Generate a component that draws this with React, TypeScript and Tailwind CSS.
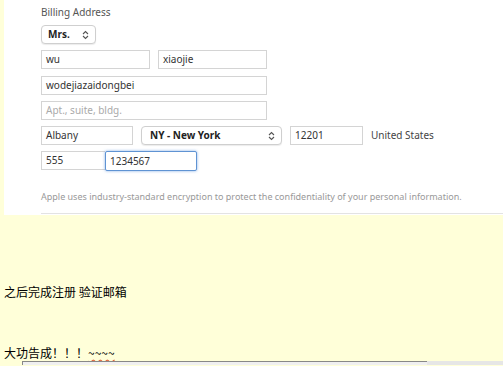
import { ReactNode } from 'react'

const font = { fontFamily: '"Noto Sans", "Open Sans", sans-serif' }

function Field({
    value,
    placeholder,
    focused,
    className,
}: {
    value?: string
    placeholder?: string
    focused?: boolean
    className: string
}): JSX.Element {
    const border = focused
        ? 'h-[20px] rounded-[2px] border-[#5f93d3] shadow-[0_0_3px_rgba(80,140,220,0.7)]'
        : 'h-[19px] border-[#d4d4d4]'
    return (
        <div
            className={`flex items-center border bg-white px-[4px] text-[10px] ${border} ${
                value ? 'text-[#333]' : 'text-[#aaa]'
            } ${className}`}
        >
            {value ?? placeholder}
        </div>
    )
}

function Chevrons(): JSX.Element {
    return (
        <svg width="7" height="10" viewBox="0 0 7 10" fill="none" stroke="#555" strokeWidth="1.1">
            <path d="M1 4 L3.5 1.5 L6 4" />
            <path d="M1 6 L3.5 8.5 L6 6" />
        </svg>
    )
}

function Select({ children, className }: { children: ReactNode; className: string }): JSX.Element {
    return (
        <div
            className={`flex h-[19px] items-center justify-between rounded-[4px] border border-[#cfcfcf] bg-white pr-[6px] text-[10px] font-bold text-[#222] shadow-[0_1px_1px_rgba(0,0,0,0.08)] ${className}`}
        >
            <span>{children}</span>
            <Chevrons />
        </div>
    )
}

export default function App(): JSX.Element {
    return (
        <div className="h-[366px] w-[503px] overflow-hidden bg-[#ffffd9]">
            <div className="ml-[4px] h-[215px] bg-white pl-[37px] pt-[4px]" style={font}>
                <div className="text-[10px] leading-[16px] text-[#555]">Billing Address</div>
                <Select className="mt-[5px] w-[55px] pl-[6px]">Mrs.</Select>
                <div className="mt-[6px] flex gap-[8px]">
                    <Field value="wu" className="w-[109px]" />
                    <Field value="xiaojie" className="w-[109px]" />
                </div>
                <Field value="wodejiazaidongbei" className="mt-[7px] w-[226px]" />
                <Field placeholder="Apt., suite, bldg." className="mt-[6px] w-[226px]" />
                <div className="mt-[6px] flex items-center">
                    <Field value="Albany" className="w-[92px]" />
                    <Select className="ml-[8px] w-[141px] pl-[8px]">NY - New York</Select>
                    <Field value="12201" className="ml-[8px] w-[73px]" />
                    <span className="ml-[8px] text-[10px] text-[#444]">United States</span>
                </div>
                <div className="mt-[6px] flex">
                    <Field value="555" className="w-[64px] border-r-0" />
                    <Field value="1234567" focused className="w-[92px]" />
                </div>
                <div className="mt-[20px] text-[9px] leading-[12px] text-[#999]">
                    Apple uses industry-standard encryption to protect the confidentiality of your personal information.
                </div>
                <div className="mt-[10px] h-px bg-[#e3e3e3]" />
            </div>
            <div
                className="ml-[4px] mt-[70px] text-[12px] leading-[14px] text-black"
                style={{ fontFamily: '"Noto Sans CJK SC", sans-serif' }}
            >
                之后完成注册 验证邮箱
            </div>
            <div
                className="ml-[4px] mt-[47px] text-[12px] leading-[14px] text-black"
                style={{ fontFamily: '"Noto Sans CJK SC", sans-serif' }}
            >
                大功告成！！！
                <span className="underline decoration-wavy decoration-[#e0603a]">~~~~</span>
            </div>
            <div className="mt-[1px] flex">
                <div className="ml-[22px] h-[4px] w-[405px] border-l border-t border-[#888] bg-[#f0f0f0]" />
                <div className="h-[4px] flex-1 bg-[#e6e6e6]" />
            </div>
        </div>
    )
}
